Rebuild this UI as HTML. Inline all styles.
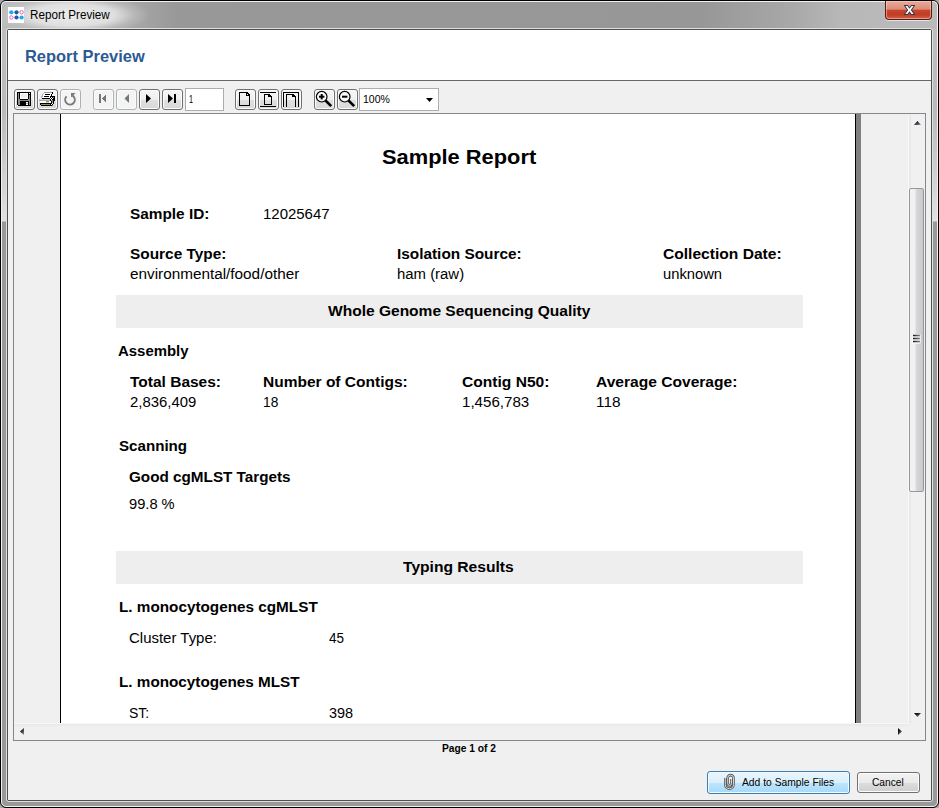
<!DOCTYPE html>
<html><head><meta charset="utf-8"><style>
*{box-sizing:border-box}
html,body{margin:0;padding:0;width:939px;height:808px;overflow:hidden;background:#a8a8a8;font-family:"Liberation Sans",sans-serif}
.a{position:absolute}
.t{position:absolute;white-space:nowrap;line-height:normal;transform-origin:0 0}
#win{position:absolute;left:0;top:0;width:939px;height:808px;border:1px solid #000;border-radius:6px 6px 6px 6px;overflow:hidden;
 background:linear-gradient(to bottom,#c0c0c0 0,#bababa 110px,#d4d4d4 185px,#e2e2e2 220px,#999 221px,#999 100%)}
#hl{position:absolute;left:0;top:0;right:0;bottom:0;border:1px solid #f2f2f2;border-radius:5px 5px 5px 5px}
#title{position:absolute;left:1px;top:1px;width:935px;height:27px;
 background:radial-gradient(ellipse 78px 20px at 70px 13px,rgba(236,236,236,1) 0,rgba(228,228,228,0.9) 55%,rgba(200,200,200,0.5) 80%,rgba(200,200,200,0) 100%),linear-gradient(to right,#bcbcbc 0,#b8b8b8 40px,#a8a8a8 130px,#989898 175px,#979797 700px,#a8a8a8 790px,#b8b8b8 840px,#bababa 935px)}
#client{position:absolute;left:8px;top:30px;width:923px;height:770px;background:#f0f0f0}
#cb{position:absolute;left:6px;top:28px;width:927px;height:774px;border:1px solid #e0e0e0;border-radius:3px}
#cb2{position:absolute;left:7px;top:29px;width:925px;height:772px;border:1px solid #505050;border-radius:2px}
.btn{position:absolute;width:21px;height:21px;border:1px solid #707070;border-radius:3px;
 background:linear-gradient(to bottom,#f6f6f6 0,#efefef 50%,#e0e0e0 51%,#d8d8d8 100%);box-shadow:inset 0 0 0 1px #fcfcfc}
.btn.dis{border-color:#adb2b5;background:#f4f4f4}
</style></head><body>
<div id="win">
 <div id="title"></div>
 <div id="hl"></div>
</div>
<div id="cb"></div>
<div id="cb2"></div>
<div id="client">
 <div class="a" style="left:0;top:0;width:923px;height:50px;background:#fff"></div>
 <div class="a" style="left:0;top:50px;width:923px;height:1px;background:#686868"></div>
</div>
<svg class="a" style="left:8px;top:7px" width="16" height="16" viewBox="0 0 16 16">
<rect width="16" height="16" fill="#fff"/>
<path d="M3.3 5.3H13.6M3.3 10.5H13.6M8.5 5.3V10.5" stroke="#bcdcf0" stroke-width="0.6"/>
<circle cx="3.3" cy="5.3" r="2.1" fill="#20a8ec"/><circle cx="8.5" cy="5.3" r="2.1" fill="#1a5ea6"/><circle cx="13.6" cy="5.3" r="1.7" fill="#fff" stroke="#ee5fb4" stroke-width="1"/>
<circle cx="3.3" cy="10.5" r="1.7" fill="#fff" stroke="#ee5fb4" stroke-width="1"/><circle cx="8.5" cy="10.5" r="2.1" fill="#1a5ea6"/><circle cx="13.6" cy="10.5" r="2.1" fill="#20a8ec"/>
</svg>
<div class="t" style="left:30.00px;top:8.00px;font-size:12px;color:#000;transform:scaleX(0.9726);">Report Preview</div>
<div class="a" style="left:885px;top:1px;width:47px;height:19px;border:1px solid #5a1a10;border-top:none;border-radius:0 0 4px 4px;box-shadow:0 1px 0 rgba(255,255,255,0.6),inset 0 0 0 1px rgba(255,220,210,0.5);background:linear-gradient(to bottom,#e9a898 0,#dd8d7a 45%,#c8442c 52%,#c23c24 75%,#d06048 100%)"></div>
<svg class="a" style="left:903px;top:4px" width="13" height="12" viewBox="0 0 14 12" preserveAspectRatio="none"><path d="M1.5 1.5H5L7 4L9 1.5H12.5L9 6L12.5 10.5H9L7 8L5 10.5H1.5L5 6Z" fill="#fff" stroke="#2e3a4a" stroke-width="1.1" stroke-linejoin="round"/></svg>
<div class="t" style="left:24.80px;top:47.00px;font-size:16.5px;font-weight:bold;color:#2c5a94;transform:scaleX(0.9963);">Report Preview</div>
<div class="btn" style="left:14px;top:89px"></div>
<div class="btn" style="left:37px;top:89px"></div>
<div class="btn dis" style="left:60px;top:89px"></div>
<div class="btn dis" style="left:93px;top:89px"></div>
<div class="btn dis" style="left:116px;top:89px"></div>
<div class="btn" style="left:139px;top:89px"></div>
<div class="btn" style="left:162px;top:89px"></div>
<div class="btn" style="left:235px;top:89px"></div>
<div class="btn" style="left:258px;top:89px"></div>
<div class="btn" style="left:281px;top:89px"></div>
<div class="btn" style="left:314px;top:89px"></div>
<div class="btn" style="left:337px;top:89px"></div>
<svg class="a" style="left:17px;top:92px" width="14" height="14" viewBox="0 0 14 14" shape-rendering="crispEdges"><rect x="0" y="0" width="1" height="1" fill="#000"/><rect x="1" y="0" width="1" height="1" fill="#000"/><rect x="2" y="0" width="1" height="1" fill="#000"/><rect x="3" y="0" width="1" height="1" fill="#000"/><rect x="4" y="0" width="1" height="1" fill="#000"/><rect x="5" y="0" width="1" height="1" fill="#000"/><rect x="6" y="0" width="1" height="1" fill="#000"/><rect x="7" y="0" width="1" height="1" fill="#000"/><rect x="8" y="0" width="1" height="1" fill="#000"/><rect x="9" y="0" width="1" height="1" fill="#000"/><rect x="10" y="0" width="1" height="1" fill="#000"/><rect x="11" y="0" width="1" height="1" fill="#000"/><rect x="12" y="0" width="1" height="1" fill="#000"/><rect x="13" y="0" width="1" height="1" fill="#000"/><rect x="0" y="1" width="1" height="1" fill="#000"/><rect x="1" y="1" width="1" height="1" fill="#8c8c8c"/><rect x="2" y="1" width="1" height="1" fill="#000"/><rect x="3" y="1" width="1" height="1" fill="#fff"/><rect x="4" y="1" width="1" height="1" fill="#fff"/><rect x="5" y="1" width="1" height="1" fill="#fff"/><rect x="6" y="1" width="1" height="1" fill="#fff"/><rect x="7" y="1" width="1" height="1" fill="#fff"/><rect x="8" y="1" width="1" height="1" fill="#fff"/><rect x="9" y="1" width="1" height="1" fill="#fff"/><rect x="10" y="1" width="1" height="1" fill="#fff"/><rect x="11" y="1" width="1" height="1" fill="#000"/><rect x="12" y="1" width="1" height="1" fill="#fff"/><rect x="13" y="1" width="1" height="1" fill="#000"/><rect x="0" y="2" width="1" height="1" fill="#000"/><rect x="1" y="2" width="1" height="1" fill="#8c8c8c"/><rect x="2" y="2" width="1" height="1" fill="#000"/><rect x="3" y="2" width="1" height="1" fill="#fff"/><rect x="4" y="2" width="1" height="1" fill="#ececec"/><rect x="5" y="2" width="1" height="1" fill="#ececec"/><rect x="6" y="2" width="1" height="1" fill="#ececec"/><rect x="7" y="2" width="1" height="1" fill="#ececec"/><rect x="8" y="2" width="1" height="1" fill="#ececec"/><rect x="9" y="2" width="1" height="1" fill="#ececec"/><rect x="10" y="2" width="1" height="1" fill="#fff"/><rect x="11" y="2" width="1" height="1" fill="#000"/><rect x="12" y="2" width="1" height="1" fill="#000"/><rect x="13" y="2" width="1" height="1" fill="#000"/><rect x="0" y="3" width="1" height="1" fill="#000"/><rect x="1" y="3" width="1" height="1" fill="#8c8c8c"/><rect x="2" y="3" width="1" height="1" fill="#000"/><rect x="3" y="3" width="1" height="1" fill="#fff"/><rect x="4" y="3" width="1" height="1" fill="#ececec"/><rect x="5" y="3" width="1" height="1" fill="#ececec"/><rect x="6" y="3" width="1" height="1" fill="#ececec"/><rect x="7" y="3" width="1" height="1" fill="#ececec"/><rect x="8" y="3" width="1" height="1" fill="#ececec"/><rect x="9" y="3" width="1" height="1" fill="#ececec"/><rect x="10" y="3" width="1" height="1" fill="#fff"/><rect x="11" y="3" width="1" height="1" fill="#000"/><rect x="12" y="3" width="1" height="1" fill="#8c8c8c"/><rect x="13" y="3" width="1" height="1" fill="#000"/><rect x="0" y="4" width="1" height="1" fill="#000"/><rect x="1" y="4" width="1" height="1" fill="#8c8c8c"/><rect x="2" y="4" width="1" height="1" fill="#000"/><rect x="3" y="4" width="1" height="1" fill="#fff"/><rect x="4" y="4" width="1" height="1" fill="#ececec"/><rect x="5" y="4" width="1" height="1" fill="#ececec"/><rect x="6" y="4" width="1" height="1" fill="#ececec"/><rect x="7" y="4" width="1" height="1" fill="#ececec"/><rect x="8" y="4" width="1" height="1" fill="#ececec"/><rect x="9" y="4" width="1" height="1" fill="#ececec"/><rect x="10" y="4" width="1" height="1" fill="#fff"/><rect x="11" y="4" width="1" height="1" fill="#000"/><rect x="12" y="4" width="1" height="1" fill="#8c8c8c"/><rect x="13" y="4" width="1" height="1" fill="#000"/><rect x="0" y="5" width="1" height="1" fill="#000"/><rect x="1" y="5" width="1" height="1" fill="#8c8c8c"/><rect x="2" y="5" width="1" height="1" fill="#000"/><rect x="3" y="5" width="1" height="1" fill="#fff"/><rect x="4" y="5" width="1" height="1" fill="#ececec"/><rect x="5" y="5" width="1" height="1" fill="#ececec"/><rect x="6" y="5" width="1" height="1" fill="#ececec"/><rect x="7" y="5" width="1" height="1" fill="#ececec"/><rect x="8" y="5" width="1" height="1" fill="#ececec"/><rect x="9" y="5" width="1" height="1" fill="#ececec"/><rect x="10" y="5" width="1" height="1" fill="#fff"/><rect x="11" y="5" width="1" height="1" fill="#000"/><rect x="12" y="5" width="1" height="1" fill="#8c8c8c"/><rect x="13" y="5" width="1" height="1" fill="#000"/><rect x="0" y="6" width="1" height="1" fill="#000"/><rect x="1" y="6" width="1" height="1" fill="#8c8c8c"/><rect x="2" y="6" width="1" height="1" fill="#000"/><rect x="3" y="6" width="1" height="1" fill="#fff"/><rect x="4" y="6" width="1" height="1" fill="#fff"/><rect x="5" y="6" width="1" height="1" fill="#fff"/><rect x="6" y="6" width="1" height="1" fill="#fff"/><rect x="7" y="6" width="1" height="1" fill="#fff"/><rect x="8" y="6" width="1" height="1" fill="#fff"/><rect x="9" y="6" width="1" height="1" fill="#fff"/><rect x="10" y="6" width="1" height="1" fill="#fff"/><rect x="11" y="6" width="1" height="1" fill="#000"/><rect x="12" y="6" width="1" height="1" fill="#8c8c8c"/><rect x="13" y="6" width="1" height="1" fill="#000"/><rect x="0" y="7" width="1" height="1" fill="#000"/><rect x="1" y="7" width="1" height="1" fill="#8c8c8c"/><rect x="2" y="7" width="1" height="1" fill="#8c8c8c"/><rect x="3" y="7" width="1" height="1" fill="#000"/><rect x="4" y="7" width="1" height="1" fill="#000"/><rect x="5" y="7" width="1" height="1" fill="#000"/><rect x="6" y="7" width="1" height="1" fill="#000"/><rect x="7" y="7" width="1" height="1" fill="#000"/><rect x="8" y="7" width="1" height="1" fill="#000"/><rect x="9" y="7" width="1" height="1" fill="#000"/><rect x="10" y="7" width="1" height="1" fill="#000"/><rect x="11" y="7" width="1" height="1" fill="#8c8c8c"/><rect x="12" y="7" width="1" height="1" fill="#8c8c8c"/><rect x="13" y="7" width="1" height="1" fill="#000"/><rect x="0" y="8" width="1" height="1" fill="#000"/><rect x="1" y="8" width="1" height="1" fill="#8c8c8c"/><rect x="2" y="8" width="1" height="1" fill="#8c8c8c"/><rect x="3" y="8" width="1" height="1" fill="#8c8c8c"/><rect x="4" y="8" width="1" height="1" fill="#8c8c8c"/><rect x="5" y="8" width="1" height="1" fill="#8c8c8c"/><rect x="6" y="8" width="1" height="1" fill="#8c8c8c"/><rect x="7" y="8" width="1" height="1" fill="#8c8c8c"/><rect x="8" y="8" width="1" height="1" fill="#8c8c8c"/><rect x="9" y="8" width="1" height="1" fill="#8c8c8c"/><rect x="10" y="8" width="1" height="1" fill="#8c8c8c"/><rect x="11" y="8" width="1" height="1" fill="#8c8c8c"/><rect x="12" y="8" width="1" height="1" fill="#8c8c8c"/><rect x="13" y="8" width="1" height="1" fill="#000"/><rect x="0" y="9" width="1" height="1" fill="#000"/><rect x="1" y="9" width="1" height="1" fill="#8c8c8c"/><rect x="2" y="9" width="1" height="1" fill="#8c8c8c"/><rect x="3" y="9" width="1" height="1" fill="#000"/><rect x="4" y="9" width="1" height="1" fill="#000"/><rect x="5" y="9" width="1" height="1" fill="#000"/><rect x="6" y="9" width="1" height="1" fill="#000"/><rect x="7" y="9" width="1" height="1" fill="#000"/><rect x="8" y="9" width="1" height="1" fill="#000"/><rect x="9" y="9" width="1" height="1" fill="#000"/><rect x="10" y="9" width="1" height="1" fill="#000"/><rect x="11" y="9" width="1" height="1" fill="#000"/><rect x="12" y="9" width="1" height="1" fill="#8c8c8c"/><rect x="13" y="9" width="1" height="1" fill="#000"/><rect x="0" y="10" width="1" height="1" fill="#000"/><rect x="1" y="10" width="1" height="1" fill="#8c8c8c"/><rect x="2" y="10" width="1" height="1" fill="#8c8c8c"/><rect x="3" y="10" width="1" height="1" fill="#000"/><rect x="4" y="10" width="1" height="1" fill="#000"/><rect x="5" y="10" width="1" height="1" fill="#000"/><rect x="6" y="10" width="1" height="1" fill="#000"/><rect x="7" y="10" width="1" height="1" fill="#000"/><rect x="8" y="10" width="1" height="1" fill="#000"/><rect x="9" y="10" width="1" height="1" fill="#fff"/><rect x="10" y="10" width="1" height="1" fill="#fff"/><rect x="11" y="10" width="1" height="1" fill="#000"/><rect x="12" y="10" width="1" height="1" fill="#8c8c8c"/><rect x="13" y="10" width="1" height="1" fill="#000"/><rect x="0" y="11" width="1" height="1" fill="#000"/><rect x="1" y="11" width="1" height="1" fill="#8c8c8c"/><rect x="2" y="11" width="1" height="1" fill="#8c8c8c"/><rect x="3" y="11" width="1" height="1" fill="#000"/><rect x="4" y="11" width="1" height="1" fill="#000"/><rect x="5" y="11" width="1" height="1" fill="#000"/><rect x="6" y="11" width="1" height="1" fill="#000"/><rect x="7" y="11" width="1" height="1" fill="#000"/><rect x="8" y="11" width="1" height="1" fill="#000"/><rect x="9" y="11" width="1" height="1" fill="#aaa"/><rect x="10" y="11" width="1" height="1" fill="#aaa"/><rect x="11" y="11" width="1" height="1" fill="#000"/><rect x="12" y="11" width="1" height="1" fill="#8c8c8c"/><rect x="13" y="11" width="1" height="1" fill="#000"/><rect x="0" y="12" width="1" height="1" fill="#000"/><rect x="1" y="12" width="1" height="1" fill="#8c8c8c"/><rect x="2" y="12" width="1" height="1" fill="#8c8c8c"/><rect x="3" y="12" width="1" height="1" fill="#000"/><rect x="4" y="12" width="1" height="1" fill="#000"/><rect x="5" y="12" width="1" height="1" fill="#000"/><rect x="6" y="12" width="1" height="1" fill="#000"/><rect x="7" y="12" width="1" height="1" fill="#000"/><rect x="8" y="12" width="1" height="1" fill="#000"/><rect x="9" y="12" width="1" height="1" fill="#fff"/><rect x="10" y="12" width="1" height="1" fill="#fff"/><rect x="11" y="12" width="1" height="1" fill="#000"/><rect x="12" y="12" width="1" height="1" fill="#8c8c8c"/><rect x="13" y="12" width="1" height="1" fill="#000"/><rect x="0" y="13" width="1" height="1" fill="#fff"/><rect x="1" y="13" width="1" height="1" fill="#000"/><rect x="2" y="13" width="1" height="1" fill="#000"/><rect x="3" y="13" width="1" height="1" fill="#000"/><rect x="4" y="13" width="1" height="1" fill="#000"/><rect x="5" y="13" width="1" height="1" fill="#000"/><rect x="6" y="13" width="1" height="1" fill="#000"/><rect x="7" y="13" width="1" height="1" fill="#000"/><rect x="8" y="13" width="1" height="1" fill="#000"/><rect x="9" y="13" width="1" height="1" fill="#000"/><rect x="10" y="13" width="1" height="1" fill="#000"/><rect x="11" y="13" width="1" height="1" fill="#000"/><rect x="12" y="13" width="1" height="1" fill="#000"/><rect x="13" y="13" width="1" height="1" fill="#000"/></svg>
<svg class="a" style="left:38px;top:92px" width="18" height="14" viewBox="0 0 18 14" shape-rendering="crispEdges"><rect x="6" y="0" width="1" height="1" fill="#9a9a9a"/><rect x="7" y="0" width="1" height="1" fill="#9a9a9a"/><rect x="8" y="0" width="1" height="1" fill="#9a9a9a"/><rect x="9" y="0" width="1" height="1" fill="#9a9a9a"/><rect x="10" y="0" width="1" height="1" fill="#9a9a9a"/><rect x="11" y="0" width="1" height="1" fill="#9a9a9a"/><rect x="12" y="0" width="1" height="1" fill="#9a9a9a"/><rect x="13" y="0" width="1" height="1" fill="#9a9a9a"/><rect x="14" y="0" width="1" height="1" fill="#000"/><rect x="5" y="1" width="1" height="1" fill="#b0b0b0"/><rect x="6" y="1" width="1" height="1" fill="#fff"/><rect x="7" y="1" width="1" height="1" fill="#fff"/><rect x="8" y="1" width="1" height="1" fill="#fff"/><rect x="9" y="1" width="1" height="1" fill="#fff"/><rect x="10" y="1" width="1" height="1" fill="#fff"/><rect x="11" y="1" width="1" height="1" fill="#fff"/><rect x="12" y="1" width="1" height="1" fill="#fff"/><rect x="13" y="1" width="1" height="1" fill="#fff"/><rect x="14" y="1" width="1" height="1" fill="#000"/><rect x="4" y="2" width="1" height="1" fill="#b0b0b0"/><rect x="5" y="2" width="1" height="1" fill="#fff"/><rect x="6" y="2" width="1" height="1" fill="#fff"/><rect x="7" y="2" width="1" height="1" fill="#000"/><rect x="8" y="2" width="1" height="1" fill="#000"/><rect x="9" y="2" width="1" height="1" fill="#000"/><rect x="10" y="2" width="1" height="1" fill="#000"/><rect x="11" y="2" width="1" height="1" fill="#000"/><rect x="12" y="2" width="1" height="1" fill="#fff"/><rect x="13" y="2" width="1" height="1" fill="#000"/><rect x="4" y="3" width="1" height="1" fill="#b0b0b0"/><rect x="5" y="3" width="1" height="1" fill="#fff"/><rect x="6" y="3" width="1" height="1" fill="#fff"/><rect x="7" y="3" width="1" height="1" fill="#fff"/><rect x="8" y="3" width="1" height="1" fill="#fff"/><rect x="9" y="3" width="1" height="1" fill="#fff"/><rect x="10" y="3" width="1" height="1" fill="#fff"/><rect x="11" y="3" width="1" height="1" fill="#fff"/><rect x="12" y="3" width="1" height="1" fill="#fff"/><rect x="13" y="3" width="1" height="1" fill="#000"/><rect x="14" y="3" width="1" height="1" fill="#fff"/><rect x="3" y="4" width="1" height="1" fill="#b0b0b0"/><rect x="4" y="4" width="1" height="1" fill="#b0b0b0"/><rect x="5" y="4" width="1" height="1" fill="#fff"/><rect x="6" y="4" width="1" height="1" fill="#000"/><rect x="7" y="4" width="1" height="1" fill="#000"/><rect x="8" y="4" width="1" height="1" fill="#000"/><rect x="9" y="4" width="1" height="1" fill="#000"/><rect x="10" y="4" width="1" height="1" fill="#000"/><rect x="11" y="4" width="1" height="1" fill="#fff"/><rect x="12" y="4" width="1" height="1" fill="#000"/><rect x="13" y="4" width="1" height="1" fill="#000"/><rect x="14" y="4" width="1" height="1" fill="#000"/><rect x="15" y="4" width="1" height="1" fill="#000"/><rect x="16" y="4" width="1" height="1" fill="#000"/><rect x="3" y="5" width="1" height="1" fill="#b0b0b0"/><rect x="4" y="5" width="1" height="1" fill="#fff"/><rect x="5" y="5" width="1" height="1" fill="#fff"/><rect x="6" y="5" width="1" height="1" fill="#fff"/><rect x="7" y="5" width="1" height="1" fill="#fff"/><rect x="8" y="5" width="1" height="1" fill="#fff"/><rect x="9" y="5" width="1" height="1" fill="#fff"/><rect x="10" y="5" width="1" height="1" fill="#fff"/><rect x="11" y="5" width="1" height="1" fill="#fff"/><rect x="12" y="5" width="1" height="1" fill="#000"/><rect x="13" y="5" width="1" height="1" fill="#fff"/><rect x="14" y="5" width="1" height="1" fill="#000"/><rect x="15" y="5" width="1" height="1" fill="#8a8a8a"/><rect x="16" y="5" width="1" height="1" fill="#000"/><rect x="4" y="6" width="1" height="1" fill="#000"/><rect x="5" y="6" width="1" height="1" fill="#000"/><rect x="6" y="6" width="1" height="1" fill="#000"/><rect x="7" y="6" width="1" height="1" fill="#000"/><rect x="8" y="6" width="1" height="1" fill="#000"/><rect x="9" y="6" width="1" height="1" fill="#000"/><rect x="10" y="6" width="1" height="1" fill="#000"/><rect x="11" y="6" width="1" height="1" fill="#000"/><rect x="12" y="6" width="1" height="1" fill="#fff"/><rect x="13" y="6" width="1" height="1" fill="#000"/><rect x="14" y="6" width="1" height="1" fill="#fff"/><rect x="15" y="6" width="1" height="1" fill="#000"/><rect x="16" y="6" width="1" height="1" fill="#000"/><rect x="1" y="7" width="1" height="1" fill="#d0d0d0"/><rect x="2" y="7" width="1" height="1" fill="#d0d0d0"/><rect x="3" y="7" width="1" height="1" fill="#d0d0d0"/><rect x="4" y="7" width="1" height="1" fill="#d0d0d0"/><rect x="5" y="7" width="1" height="1" fill="#d0d0d0"/><rect x="6" y="7" width="1" height="1" fill="#d0d0d0"/><rect x="7" y="7" width="1" height="1" fill="#d0d0d0"/><rect x="8" y="7" width="1" height="1" fill="#d0d0d0"/><rect x="9" y="7" width="1" height="1" fill="#d0d0d0"/><rect x="10" y="7" width="1" height="1" fill="#d0d0d0"/><rect x="11" y="7" width="1" height="1" fill="#d0d0d0"/><rect x="12" y="7" width="1" height="1" fill="#000"/><rect x="13" y="7" width="1" height="1" fill="#fff"/><rect x="14" y="7" width="1" height="1" fill="#000"/><rect x="15" y="7" width="1" height="1" fill="#000"/><rect x="16" y="7" width="1" height="1" fill="#000"/><rect x="1" y="8" width="1" height="1" fill="#a8a8a8"/><rect x="2" y="8" width="1" height="1" fill="#a8a8a8"/><rect x="3" y="8" width="1" height="1" fill="#a8a8a8"/><rect x="4" y="8" width="1" height="1" fill="#a8a8a8"/><rect x="5" y="8" width="1" height="1" fill="#a8a8a8"/><rect x="6" y="8" width="1" height="1" fill="#a8a8a8"/><rect x="7" y="8" width="1" height="1" fill="#a8a8a8"/><rect x="8" y="8" width="1" height="1" fill="#a8a8a8"/><rect x="9" y="8" width="1" height="1" fill="#a8a8a8"/><rect x="10" y="8" width="1" height="1" fill="#a8a8a8"/><rect x="11" y="8" width="1" height="1" fill="#a8a8a8"/><rect x="12" y="8" width="1" height="1" fill="#000"/><rect x="13" y="8" width="1" height="1" fill="#8a8a8a"/><rect x="14" y="8" width="1" height="1" fill="#8a8a8a"/><rect x="15" y="8" width="1" height="1" fill="#000"/><rect x="16" y="8" width="1" height="1" fill="#000"/><rect x="2" y="9" width="1" height="1" fill="#fff"/><rect x="3" y="9" width="1" height="1" fill="#fff"/><rect x="4" y="9" width="1" height="1" fill="#fff"/><rect x="5" y="9" width="1" height="1" fill="#fff"/><rect x="6" y="9" width="1" height="1" fill="#fff"/><rect x="7" y="9" width="1" height="1" fill="#fff"/><rect x="8" y="9" width="1" height="1" fill="#8c8cb4"/><rect x="9" y="9" width="1" height="1" fill="#8c8cb4"/><rect x="10" y="9" width="1" height="1" fill="#8c8cb4"/><rect x="11" y="9" width="1" height="1" fill="#fff"/><rect x="12" y="9" width="1" height="1" fill="#fff"/><rect x="13" y="9" width="1" height="1" fill="#000"/><rect x="14" y="9" width="1" height="1" fill="#8a8a8a"/><rect x="15" y="9" width="1" height="1" fill="#000"/><rect x="2" y="10" width="1" height="1" fill="#fff"/><rect x="3" y="10" width="1" height="1" fill="#fff"/><rect x="4" y="10" width="1" height="1" fill="#fff"/><rect x="5" y="10" width="1" height="1" fill="#fff"/><rect x="6" y="10" width="1" height="1" fill="#fff"/><rect x="7" y="10" width="1" height="1" fill="#fff"/><rect x="8" y="10" width="1" height="1" fill="#f0e800"/><rect x="9" y="10" width="1" height="1" fill="#f0e800"/><rect x="10" y="10" width="1" height="1" fill="#f0e800"/><rect x="11" y="10" width="1" height="1" fill="#fff"/><rect x="12" y="10" width="1" height="1" fill="#fff"/><rect x="13" y="10" width="1" height="1" fill="#000"/><rect x="14" y="10" width="1" height="1" fill="#8a8a8a"/><rect x="15" y="10" width="1" height="1" fill="#000"/><rect x="2" y="11" width="1" height="1" fill="#000"/><rect x="3" y="11" width="1" height="1" fill="#000"/><rect x="4" y="11" width="1" height="1" fill="#000"/><rect x="5" y="11" width="1" height="1" fill="#000"/><rect x="6" y="11" width="1" height="1" fill="#000"/><rect x="7" y="11" width="1" height="1" fill="#000"/><rect x="8" y="11" width="1" height="1" fill="#000"/><rect x="9" y="11" width="1" height="1" fill="#000"/><rect x="10" y="11" width="1" height="1" fill="#000"/><rect x="11" y="11" width="1" height="1" fill="#000"/><rect x="12" y="11" width="1" height="1" fill="#000"/><rect x="13" y="11" width="1" height="1" fill="#000"/><rect x="14" y="11" width="1" height="1" fill="#fff"/><rect x="15" y="11" width="1" height="1" fill="#000"/><rect x="2" y="12" width="1" height="1" fill="#000"/><rect x="3" y="12" width="1" height="1" fill="#8a8a8a"/><rect x="4" y="12" width="1" height="1" fill="#8a8a8a"/><rect x="5" y="12" width="1" height="1" fill="#8a8a8a"/><rect x="6" y="12" width="1" height="1" fill="#8a8a8a"/><rect x="7" y="12" width="1" height="1" fill="#8a8a8a"/><rect x="8" y="12" width="1" height="1" fill="#8a8a8a"/><rect x="9" y="12" width="1" height="1" fill="#8a8a8a"/><rect x="10" y="12" width="1" height="1" fill="#8a8a8a"/><rect x="11" y="12" width="1" height="1" fill="#8a8a8a"/><rect x="12" y="12" width="1" height="1" fill="#000"/><rect x="13" y="12" width="1" height="1" fill="#fff"/><rect x="14" y="12" width="1" height="1" fill="#000"/><rect x="3" y="13" width="1" height="1" fill="#000"/><rect x="4" y="13" width="1" height="1" fill="#000"/><rect x="5" y="13" width="1" height="1" fill="#000"/><rect x="6" y="13" width="1" height="1" fill="#000"/><rect x="7" y="13" width="1" height="1" fill="#000"/><rect x="8" y="13" width="1" height="1" fill="#000"/><rect x="9" y="13" width="1" height="1" fill="#000"/><rect x="10" y="13" width="1" height="1" fill="#000"/><rect x="11" y="13" width="1" height="1" fill="#000"/><rect x="12" y="13" width="1" height="1" fill="#000"/><rect x="13" y="13" width="1" height="1" fill="#000"/><rect x="14" y="13" width="1" height="1" fill="#8a8a8a"/></svg>
<svg class="a" style="left:63px;top:92px" width="14" height="14" viewBox="0 0 14 14"><path d="M3.6 4.4A4.8 4.8 0 1 0 10.5 4.5L9.5 3.5" fill="none" stroke="#7a7a7a" stroke-width="2"/><path d="M8 1H12.6L8 5.6Z" fill="#7a7a7a"/></svg>
<svg class="a" style="left:99px;top:94px" width="8" height="9" viewBox="0 0 8 9" shape-rendering="crispEdges"><rect x="0" y="0" width="2" height="9" fill="#777"/><path d="M7 0V9L3 4.5Z" fill="#777"/></svg>
<svg class="a" style="left:124px;top:94px" width="6" height="9"><path d="M5 0V9L0.5 4.5Z" fill="#777"/></svg>
<svg class="a" style="left:146px;top:94px" width="6" height="9"><path d="M0 0V9L5 4.5Z" fill="#000"/></svg>
<svg class="a" style="left:168px;top:94px" width="8" height="9"><path d="M0 0V9L5 4.5Z" fill="#000"/><rect x="6" y="0" width="2" height="9" fill="#000"/></svg>
<svg class="a" style="left:239px;top:92px" width="11" height="14" viewBox="0 0 11 14" shape-rendering="crispEdges"><path d="M0.5 0.5H8L10.5 3V13.5H0.5Z" fill="none" stroke="#000"/><rect x="7" y="1" width="1" height="3" fill="#000"/><rect x="7" y="3" width="3" height="1" fill="#000"/></svg>
<svg class="a" style="left:260px;top:92px" width="16" height="15" viewBox="0 0 16 15" shape-rendering="crispEdges"><rect x="0" y="0" width="16" height="1" fill="#000"/><rect x="0" y="14" width="16" height="1" fill="#000"/><path d="M4.5 2.5H9L11.5 5V12.5H4.5Z" fill="none" stroke="#000"/><rect x="8" y="3" width="1" height="2" fill="#000"/><rect x="9" y="4" width="2" height="1" fill="#000"/></svg>
<svg class="a" style="left:283px;top:92px" width="16" height="15" viewBox="0 0 16 15" shape-rendering="crispEdges"><rect x="0" y="0" width="16" height="1" fill="#000"/><rect x="0" y="0" width="1" height="15" fill="#000"/><rect x="15" y="0" width="1" height="15" fill="#000"/><path d="M3.5 15V2.5H10L12.5 5V15" fill="none" stroke="#000"/><rect x="9" y="3" width="1" height="2" fill="#000"/><rect x="10" y="4" width="2" height="1" fill="#000"/></svg>
<svg class="a" style="left:314px;top:89px" width="20" height="20" viewBox="0 0 20 20"><circle cx="7.7" cy="7.7" r="5.3" fill="#fff" fill-opacity="0.5" stroke="#000" stroke-width="1.2"/><path d="M11.5 11.5L17.2 17.2" stroke="#000" stroke-width="2.6"/><path d="M5 7.7H10.4" stroke="#000" stroke-width="2"/><path d="M7.7 5V10.4" stroke="#000" stroke-width="2"/></svg>
<svg class="a" style="left:337px;top:89px" width="20" height="20" viewBox="0 0 20 20"><circle cx="7.7" cy="7.7" r="5.3" fill="#fff" fill-opacity="0.5" stroke="#000" stroke-width="1.2"/><path d="M11.5 11.5L17.2 17.2" stroke="#000" stroke-width="2.6"/><path d="M5 7.7H10.4" stroke="#000" stroke-width="2"/></svg>
<div class="a" style="left:185px;top:88px;width:39px;height:23px;background:#fff;border:1px solid #abadb3"></div>
<div class="t" style="left:189.00px;top:93.00px;font-size:11px;color:#000;transform:scaleX(0.6667);">1</div>
<div class="a" style="left:359px;top:88px;width:80px;height:23px;background:#fff;border:1px solid #abadb3"></div>
<div class="t" style="left:363.00px;top:93.00px;font-size:11px;color:#000;transform:scaleX(0.9558);">100%</div>
<svg class="a" style="left:426px;top:98px" width="8" height="5"><path d="M0 0H7L3.5 4Z" fill="#000"/></svg>
<div class="a" style="left:13px;top:113px;width:913px;height:628px;border:1px solid #828790;background:#f0f0f0"></div>
<div class="a" style="left:60px;top:114px;width:796px;height:609px;background:#fff;border-left:1px solid #000;border-right:1px solid #000"></div>
<div class="a" style="left:856px;top:114px;width:5px;height:609px;background:#808080"></div>
<div class="a" style="left:116px;top:295px;width:687px;height:33px;background:#eee"></div>
<div class="a" style="left:116px;top:551px;width:687px;height:33px;background:#eee"></div>
<div class="a" style="left:0;top:0;width:939px;height:723px;overflow:hidden;clip-path:inset(114px 0 0 0)">
<div class="t" style="left:382.00px;top:147.00px;font-size:19.3px;font-weight:bold;color:#000;transform:scaleX(1.1332);">Sample Report</div>
<div class="t" style="left:129.90px;top:207.00px;font-size:13.8px;font-weight:bold;color:#000;transform:scaleX(1.1130);">Sample ID:</div>
<div class="t" style="left:262.60px;top:207.00px;font-size:13.8px;color:#000;transform:scaleX(1.0846);">12025647</div>
<div class="t" style="left:130.00px;top:247.00px;font-size:13.8px;font-weight:bold;color:#000;transform:scaleX(1.1165);">Source Type:</div>
<div class="t" style="left:396.60px;top:247.00px;font-size:13.8px;font-weight:bold;color:#000;transform:scaleX(1.1134);">Isolation Source:</div>
<div class="t" style="left:662.70px;top:247.00px;font-size:13.8px;font-weight:bold;color:#000;transform:scaleX(1.1295);">Collection Date:</div>
<div class="t" style="left:130.00px;top:267.00px;font-size:13.8px;color:#000;transform:scaleX(1.1089);">environmental/food/other</div>
<div class="t" style="left:396.60px;top:267.00px;font-size:13.8px;color:#000;transform:scaleX(1.0806);">ham (raw)</div>
<div class="t" style="left:662.70px;top:267.00px;font-size:13.8px;color:#000;transform:scaleX(1.0679);">unknown</div>
<div class="t" style="left:327.50px;top:304.00px;font-size:13.8px;font-weight:bold;color:#000;transform:scaleX(1.1258);">Whole Genome Sequencing Quality</div>
<div class="t" style="left:118.30px;top:344.00px;font-size:13.8px;font-weight:bold;color:#000;transform:scaleX(1.0820);">Assembly</div>
<div class="t" style="left:129.60px;top:375.00px;font-size:13.8px;font-weight:bold;color:#000;transform:scaleX(1.1235);">Total Bases:</div>
<div class="t" style="left:262.80px;top:375.00px;font-size:13.8px;font-weight:bold;color:#000;transform:scaleX(1.1239);">Number of Contigs:</div>
<div class="t" style="left:462.20px;top:375.00px;font-size:13.8px;font-weight:bold;color:#000;transform:scaleX(1.1290);">Contig N50:</div>
<div class="t" style="left:596.10px;top:375.00px;font-size:13.8px;font-weight:bold;color:#000;transform:scaleX(1.1289);">Average Coverage:</div>
<div class="t" style="left:129.60px;top:395.00px;font-size:13.8px;color:#000;transform:scaleX(1.0792);">2,836,409</div>
<div class="t" style="left:262.80px;top:395.00px;font-size:13.8px;color:#000;transform:scaleX(0.9967);">18</div>
<div class="t" style="left:462.20px;top:395.00px;font-size:13.8px;color:#000;transform:scaleX(1.0955);">1,456,783</div>
<div class="t" style="left:596.10px;top:395.00px;font-size:13.8px;color:#000;transform:scaleX(1.1136);">118</div>
<div class="t" style="left:118.70px;top:439.00px;font-size:13.8px;font-weight:bold;color:#000;transform:scaleX(1.0968);">Scanning</div>
<div class="t" style="left:129.30px;top:470.00px;font-size:13.8px;font-weight:bold;color:#000;transform:scaleX(1.1056);">Good cgMLST Targets</div>
<div class="t" style="left:129.30px;top:497.00px;font-size:13.8px;color:#000;transform:scaleX(1.0628);">99.8 %</div>
<div class="t" style="left:403.40px;top:560.00px;font-size:13.8px;font-weight:bold;color:#000;transform:scaleX(1.1315);">Typing Results</div>
<div class="t" style="left:118.80px;top:600.00px;font-size:13.8px;font-weight:bold;color:#000;transform:scaleX(1.1079);">L. monocytogenes cgMLST</div>
<div class="t" style="left:129.00px;top:631.00px;font-size:13.8px;color:#000;transform:scaleX(1.0852);">Cluster Type:</div>
<div class="t" style="left:329.30px;top:631.00px;font-size:13.8px;color:#000;transform:scaleX(0.9770);">45</div>
<div class="t" style="left:118.80px;top:675.00px;font-size:13.8px;font-weight:bold;color:#000;transform:scaleX(1.1063);">L. monocytogenes MLST</div>
<div class="t" style="left:129.00px;top:706.00px;font-size:13.8px;color:#000;transform:scaleX(1.0150);">ST:</div>
<div class="t" style="left:329.30px;top:706.00px;font-size:13.8px;color:#000;transform:scaleX(1.0478);">398</div>
</div>
<div class="a" style="left:908px;top:114px;width:17px;height:609px;background:linear-gradient(to right,#e6e6e6 0,#f0f0f0 3px,#f0f0f0 100%);border-left:1px solid #f8f8f8"></div>
<svg class="a" style="left:914px;top:121px" width="7" height="4"><defs><linearGradient id="ga" x1="0" y1="0" x2="1" y2="1"><stop offset="0.3" stop-color="#111"/><stop offset="1" stop-color="#999"/></linearGradient></defs><path d="M0 4H7L3.5 0Z" fill="url(#ga)"/></svg>
<svg class="a" style="left:914px;top:713px" width="7" height="4"><path d="M0 0H7L3.5 4Z" fill="url(#ga)"/></svg>
<div class="a" style="left:909px;top:188px;width:15px;height:304px;border:1px solid #979797;border-radius:2px;background:linear-gradient(to right,#f2f2f2 0,#f0f0f0 40%,#dadada 45%,#c8c8cc 100%)"></div>
<svg class="a" style="left:912px;top:334px" width="9" height="10" viewBox="0 0 9 10"><rect x="0" y="0" width="9" height="10" rx="2" fill="#fff" fill-opacity="0.6"/><path d="M1 1.5H8M1 4.5H8M1 7.5H8" stroke="url(#gg)" stroke-width="1.3"/><defs><linearGradient id="gg"><stop offset="0" stop-color="#111"/><stop offset="1" stop-color="#888"/></linearGradient></defs></svg>
<div class="a" style="left:14px;top:723px;width:894px;height:17px;background:linear-gradient(to bottom,#e8e8e8 0,#f0f0f0 3px,#f0f0f0 100%);border-top:1px solid #f8f8f8"></div>
<svg class="a" style="left:20px;top:728px" width="5" height="7"><path d="M4 0V7L0 3.5Z" fill="url(#ga)"/></svg>
<svg class="a" style="left:898px;top:728px" width="5" height="7"><path d="M0 0V7L4 3.5Z" fill="url(#ga)"/></svg>
<div class="t" style="left:442.40px;top:743.00px;font-size:10px;font-weight:bold;color:#000;transform:scaleX(1.0237);">Page 1 of 2</div>
<div class="a" style="left:707px;top:771px;width:143px;height:23px;border:1px solid #3c7fb1;border-radius:3px;box-shadow:inset 0 0 0 1px #f0faff;background:linear-gradient(to bottom,#eaf6fd 0,#d9f0fc 50%,#bee6fd 51%,#a7d9f5 100%)"></div>
<svg class="a" style="left:723px;top:773px" width="13" height="17" viewBox="0 0 13 17"><path d="M2.3 5V11.5A4.1 4.1 0 0 0 10.5 11.5V5A2.9 2.9 0 0 0 4.7 5V10.5A1.9 1.9 0 0 0 8.5 10.5V6" fill="none" stroke="#5a5a5a" stroke-width="2.6"/><path d="M2.3 5V11.5A4.1 4.1 0 0 0 10.5 11.5V5A2.9 2.9 0 0 0 4.7 5V10.5A1.9 1.9 0 0 0 8.5 10.5V6" fill="none" stroke="#e4e4e4" stroke-width="0.9"/></svg>
<div class="t" style="left:742.10px;top:776.00px;font-size:11px;color:#000;transform:scaleX(0.9360);">Add to Sample Files</div>
<div class="a" style="left:857px;top:772px;width:63px;height:21px;border:1px solid #707070;border-radius:3px;box-shadow:inset 0 0 0 1px #fcfcfc;background:linear-gradient(to bottom,#f2f2f2 0,#ebebeb 50%,#dddddd 51%,#cfcfcf 100%)"></div>
<div class="t" style="left:871.50px;top:776.00px;font-size:11px;color:#000;transform:scaleX(0.9255);">Cancel</div>
</body></html>
